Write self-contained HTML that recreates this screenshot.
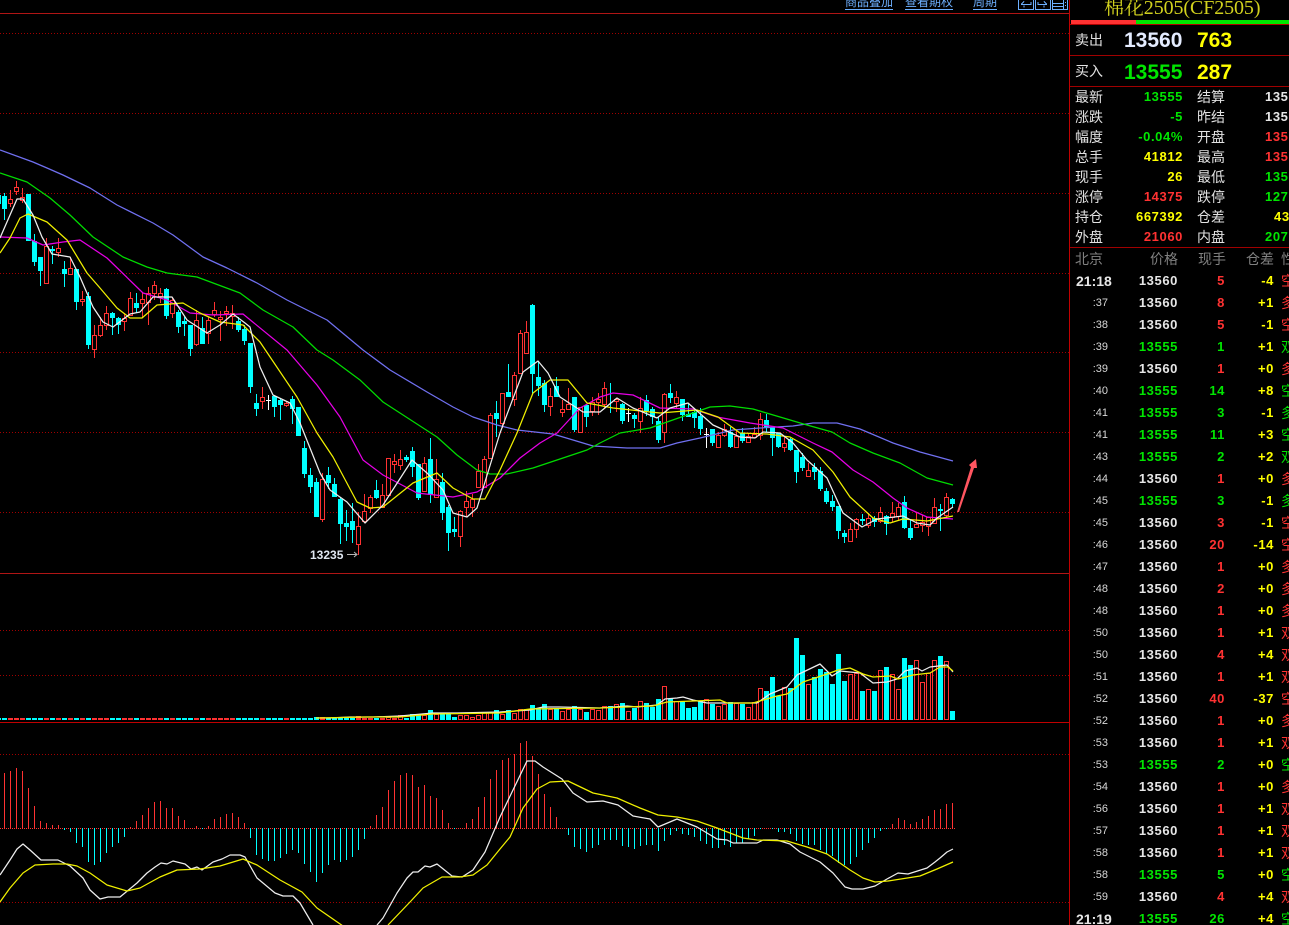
<!DOCTYPE html>
<html><head><meta charset="utf-8"><style>
html,body{margin:0;padding:0;background:#000;width:1289px;height:925px;overflow:hidden}
#c{position:absolute;left:0;top:0}
#p{position:absolute;left:1070px;top:0;width:219px;height:925px;overflow:hidden;font-family:"Liberation Sans","Noto Sans CJK SC",sans-serif;color:#d8d8d8}
#p span{position:absolute;white-space:nowrap}
.l{font-size:14px;line-height:20px;font-family:"Noto Sans CJK SC",sans-serif;color:#e2e2e2;font-weight:400}
.v{font-size:13px;line-height:20px;font-weight:bold;letter-spacing:.6px;text-align:right;right:106px}
.w{font-size:13px;line-height:20px;font-weight:bold;letter-spacing:.6px;left:195px}
.B{font-size:21px;font-weight:bold;line-height:26px}
.R{color:#ff3232}.G{color:#00e600}.Y{color:#ffff00}.W{color:#e6e6e6}
.r{position:absolute;left:0;width:219px;height:22px;line-height:22px}
.r span{line-height:22px}
.t{right:181px;font-size:11px;color:#d8d8d8}
.T{left:6px;font-size:14px;font-weight:bold;color:#e6e6e6}
.q{right:111px;font-size:13px;font-weight:bold;letter-spacing:.6px}
.n{right:64px;font-size:13px;font-weight:bold;letter-spacing:.6px}
.d{right:15px;font-size:13px;font-weight:bold;letter-spacing:.6px;color:#ffff00}
.x{left:211px;font-size:14px;font-family:"Noto Sans CJK SC",sans-serif;font-weight:400}
.h{font-size:14px;line-height:22px;color:#808080;font-family:"Noto Sans CJK SC",sans-serif;font-weight:400}
.ln{position:absolute;top:-4px;font-size:12px;line-height:12px;color:#6eb0ff;font-family:"Noto Sans CJK SC",sans-serif;white-space:nowrap}
</style></head><body>
<svg id="c" width="1289" height="925" viewBox="0 0 1289 925" fill="none">
<g stroke="#a00000" stroke-dasharray="1 2" shape-rendering="crispEdges">
<path d="M0 33.5H1069M0 113.5H1069M0 193.5H1069M0 273.5H1069M0 352.5H1069M0 432.5H1069M0 512.5H1069M0 630.5H1069M0 675.5H1069M0 754.5H1069M0 902.5H1069"/>
</g>
<g stroke="#b01515" shape-rendering="crispEdges">
<path d="M0 13.5H1069M0 573.5H1069"/>
<path stroke="#c00000" d="M0 722.5H1069M1069.5 0V925"/>
</g>
<path stroke="#ff3232" stroke-dasharray="1 1" shape-rendering="crispEdges" d="M0 828.5H955"/>

<g shape-rendering="crispEdges">
<!-- cyan wicks -->
<path stroke="#00ffff" d="M4.5 193V220M34.5 234V266M40.5 257V286M52.5 246V264M64.5 261V287M76.5 269V310M88.5 292V349M112.5 312V335M118.5 317V334M136.5 293V313M166.5 288V319M178.5 310V333M184.5 317V336M190.5 325V356M202.5 317V344M238.5 317V332M244.5 325V345M250.5 343V393M256.5 394V416M274.5 395V417M280.5 398V420M292.5 396V424M304.5 441V478M310.5 468V493M316.5 478V517M328.5 467V489M334.5 478V497M340.5 497V544M346.5 510V541M352.5 503V543M376.5 480V499M406.5 455V462M412.5 447V477M418.5 464V500M430.5 438V503M442.5 473V520M448.5 505V551M454.5 517V537M496.5 401V437M508.5 364V397M532.5 304V395M538.5 361V396M544.5 380V412M556.5 377V397M574.5 397V432M586.5 405V427M610.5 383V413M622.5 403V424M634.5 413V428M646.5 395V416M652.5 407V424M658.5 417V443M670.5 384V403M682.5 399V421M688.5 403V417M694.5 410V428M700.5 408V435M712.5 429V446M730.5 427V448M742.5 428V443M766.5 414V432M772.5 427V456M778.5 433V448M790.5 438V451M796.5 450V483M802.5 453V471M814.5 463V480M820.5 467V491M826.5 488V504M832.5 495V511M838.5 506V539M844.5 530V543M862.5 514V525M874.5 516V527M886.5 515V535M904.5 496V529M910.5 520V540M940.5 504V531M952.5 498V508"/>
<!-- cyan bodies -->
<path stroke="#00ffff" stroke-width="5" d="M-1.5 195V204M4.5 196V209M28.5 194V241M34.5 241V262M40.5 257V271M52.5 249V251M64.5 269V274M76.5 269V302M88.5 296V345M112.5 313V318M118.5 318V325M136.5 303V308M166.5 289V316M178.5 312V327M184.5 321V324M190.5 325V349M202.5 328V344M238.5 321V330M244.5 329V341M250.5 343V387M256.5 403V409M274.5 396V407M280.5 400V405M292.5 399V409M298.5 407V436M304.5 448V474M310.5 475V487M316.5 482V517M328.5 475V483M334.5 484V497M340.5 499V524M346.5 523V527M352.5 521V530M376.5 490V498M406.5 457V460M412.5 451V467M418.5 464V498M430.5 459V495M442.5 482V513M448.5 507V533M454.5 529V532M496.5 413V419M508.5 392V397M532.5 305V374M538.5 377V386M544.5 383V405M556.5 386V397M574.5 397V430M586.5 405V417M622.5 404V421M634.5 415V419M646.5 400V411M652.5 409V417M658.5 421V440M670.5 393V398M682.5 399V415M688.5 414V417M694.5 412V418M700.5 416V429M712.5 429V443M730.5 432V447M742.5 433V441M766.5 420V428M772.5 427V438M778.5 433V447M790.5 439V450M796.5 450V472M802.5 457V468M814.5 467V472M820.5 471V489M826.5 491V502M832.5 501V507M838.5 506V531M844.5 533V537M862.5 519V521M874.5 518V522M886.5 516V524M904.5 502V528M910.5 528V538M940.5 509V511M952.5 499V504"/>
<!-- red wicks -->
<path stroke="#ff3232" d="M10.5 190V207M16.5 181V195M22.5 188V203M46.5 238V283M58.5 238V257M70.5 257V274M82.5 291V306M94.5 325V358M100.5 317V337M106.5 306V330M124.5 313V331M130.5 292V315M142.5 293V317M148.5 287V325M154.5 281V300M160.5 288V303M172.5 297V318M196.5 310V346M208.5 317V344M214.5 302V317M220.5 311V341M226.5 306V326M232.5 305V329M262.5 387V409M286.5 402V407M322.5 473V522M358.5 512V555M364.5 494V522M370.5 495V513M382.5 484V508M388.5 458V496M394.5 454V473M400.5 450V470M424.5 457V492M436.5 459V498M460.5 510V547M466.5 491V517M472.5 494V517M478.5 464V487M484.5 456V487M490.5 413V458M502.5 393V428M514.5 372V406M520.5 330V373M526.5 321V353M550.5 388V416M562.5 400V417M568.5 388V409M580.5 407V432M592.5 397V416M598.5 393V415M604.5 382V408M616.5 398V412M640.5 397V433M664.5 393V443M676.5 391V408M718.5 432V448M724.5 424V437M736.5 431V448M748.5 433V443M754.5 427V437M760.5 413V440M784.5 437V452M808.5 463V476M850.5 523V542M856.5 518V538M868.5 513V528M880.5 507V523M892.5 502V522M898.5 503V521M916.5 512V528M922.5 515V532M928.5 517V536M934.5 498V523M946.5 493V519"/>
<!-- red bodies -->
<path stroke="#ff3232" fill="#000" d="M8.5 199.5h4V203.5h-4zM14.5 187.5h4V191.5h-4zM20.5 197.5h4V200.5h-4zM44.5 246.5h4V283.5h-4zM56.5 248.5h4V252.5h-4zM68.5 268.5h4V274.5h-4zM80.5 299.5h4V301.5h-4zM92.5 335.5h4V349.5h-4zM98.5 325.5h4V335.5h-4zM104.5 313.5h4V325.5h-4zM122.5 318.5h4V321.5h-4zM128.5 298.5h4V315.5h-4zM140.5 299.5h4V303.5h-4zM146.5 293.5h4V302.5h-4zM152.5 285.5h4V293.5h-4zM158.5 293.5h4V296.5h-4zM170.5 300.5h4V313.5h-4zM194.5 320.5h4V344.5h-4zM206.5 320.5h4V333.5h-4zM212.5 310.5h4V314.5h-4zM218.5 317.5h4V319.5h-4zM224.5 311.5h4V313.5h-4zM230.5 313.5h4V316.5h-4zM260.5 397.5h4V401.5h-4zM284.5 403.5h4V405.5h-4zM320.5 479.5h4V519.5h-4zM356.5 526.5h4V544.5h-4zM362.5 511.5h4V521.5h-4zM368.5 497.5h4V508.5h-4zM380.5 495.5h4V507.5h-4zM386.5 458.5h4V495.5h-4zM392.5 461.5h4V464.5h-4zM398.5 459.5h4V465.5h-4zM422.5 463.5h4V491.5h-4zM434.5 479.5h4V497.5h-4zM458.5 511.5h4V536.5h-4zM464.5 501.5h4V507.5h-4zM470.5 499.5h4V507.5h-4zM476.5 471.5h4V487.5h-4zM482.5 459.5h4V487.5h-4zM488.5 415.5h4V458.5h-4zM500.5 393.5h4V423.5h-4zM512.5 375.5h4V399.5h-4zM518.5 333.5h4V373.5h-4zM524.5 332.5h4V353.5h-4zM548.5 396.5h4V406.5h-4zM560.5 409.5h4V412.5h-4zM566.5 404.5h4V409.5h-4zM578.5 407.5h4V432.5h-4zM590.5 402.5h4V411.5h-4zM596.5 399.5h4V402.5h-4zM602.5 388.5h4V404.5h-4zM614.5 399.5h4V401.5h-4zM638.5 408.5h4V421.5h-4zM662.5 394.5h4V432.5h-4zM674.5 397.5h4V403.5h-4zM716.5 435.5h4V447.5h-4zM722.5 429.5h4V435.5h-4zM734.5 436.5h4V447.5h-4zM746.5 436.5h4V442.5h-4zM752.5 434.5h4V437.5h-4zM758.5 419.5h4V435.5h-4zM782.5 443.5h4V447.5h-4zM806.5 470.5h4V476.5h-4zM848.5 529.5h4V541.5h-4zM854.5 519.5h4V529.5h-4zM866.5 518.5h4V525.5h-4zM878.5 512.5h4V521.5h-4zM890.5 513.5h4V517.5h-4zM896.5 507.5h4V516.5h-4zM914.5 524.5h4V527.5h-4zM920.5 522.5h4V525.5h-4zM926.5 517.5h4V526.5h-4zM932.5 507.5h4V523.5h-4zM944.5 497.5h4V515.5h-4z"/>
<!-- white doji -->
<path stroke="#fff" d="M268.5 395V410M266 400.5h5M628.5 408V422M626 413.5h5M706.5 428V448M704 434.5h5"/>

<!-- volume -->
<path stroke="#00ffff" stroke-width="5" d="M-1.5 720v-2M4.5 720v-2M28.5 720v-2M34.5 720v-2M40.5 720v-2M52.5 720v-2M64.5 720v-2M76.5 720v-2M88.5 720v-2M112.5 720v-2M118.5 720v-2M136.5 720v-2M166.5 720v-2M178.5 720v-2M184.5 720v-2M190.5 720v-2M202.5 720v-2M238.5 720v-2M244.5 720v-2M250.5 720v-2M256.5 720v-2M268.5 720v-2M274.5 720v-2M280.5 720v-2M292.5 720v-2M298.5 720v-2M304.5 720v-2M310.5 720v-2M316.5 720v-3M328.5 720v-2M334.5 720v-2M340.5 720v-3M346.5 720v-3M352.5 720v-2M376.5 720v-2M406.5 720v-2M412.5 720v-6M418.5 720v-6M430.5 720v-10M442.5 720v-6M448.5 720v-6M454.5 720v-3M496.5 720v-10M508.5 720v-10M532.5 720v-15M538.5 720v-12M544.5 720v-16M556.5 720v-12M574.5 720v-14M586.5 720v-8M610.5 720v-14M622.5 720v-17M634.5 720v-12M646.5 720v-17M652.5 720v-13M658.5 720v-21M670.5 720v-21M682.5 720v-19M688.5 720v-12M694.5 720v-13M700.5 720v-19M712.5 720v-16M730.5 720v-18M742.5 720v-16M766.5 720v-29M772.5 720v-43M778.5 720v-24M790.5 720v-32M796.5 720v-82M802.5 720v-65M814.5 720v-43M820.5 720v-51M826.5 720v-48M832.5 720v-36M838.5 720v-66M844.5 720v-39M862.5 720v-29M874.5 720v-29M886.5 720v-53M904.5 720v-62M910.5 720v-55M940.5 720v-64M952.5 720v-9"/>
<path stroke="#ff3232" stroke-width="5" d="M10.5 720v-2M16.5 720v-2M22.5 720v-2M46.5 720v-2M58.5 720v-2M70.5 720v-2M82.5 720v-2M94.5 720v-2M100.5 720v-2M106.5 720v-2M124.5 720v-2M130.5 720v-2M142.5 720v-2M148.5 720v-2M154.5 720v-2M160.5 720v-2M172.5 720v-2M196.5 720v-2M208.5 720v-2M214.5 720v-2M220.5 720v-2M226.5 720v-2M232.5 720v-2M262.5 720v-2M286.5 720v-2M322.5 720v-3M358.5 720v-4M364.5 720v-2M370.5 720v-2M382.5 720v-2M394.5 720v-2"/>
<path stroke="#ff3232" d="M386.5 717.5h4V719.5h-4zM398.5 715.5h4V719.5h-4zM422.5 715.5h4V719.5h-4zM434.5 714.5h4V719.5h-4zM458.5 715.5h4V719.5h-4zM464.5 715.5h4V719.5h-4zM470.5 717.5h4V719.5h-4zM476.5 715.5h4V719.5h-4zM482.5 712.5h4V719.5h-4zM488.5 712.5h4V719.5h-4zM500.5 714.5h4V719.5h-4zM512.5 713.5h4V719.5h-4zM518.5 709.5h4V719.5h-4zM524.5 709.5h4V719.5h-4zM548.5 709.5h4V719.5h-4zM560.5 711.5h4V719.5h-4zM566.5 709.5h4V719.5h-4zM578.5 709.5h4V719.5h-4zM590.5 709.5h4V719.5h-4zM596.5 710.5h4V719.5h-4zM602.5 706.5h4V719.5h-4zM614.5 704.5h4V719.5h-4zM626.5 711.5h4V719.5h-4zM638.5 701.5h4V719.5h-4zM662.5 686.5h4V719.5h-4zM674.5 701.5h4V719.5h-4zM704.5 699.5h4V719.5h-4zM716.5 706.5h4V719.5h-4zM722.5 704.5h4V719.5h-4zM734.5 703.5h4V719.5h-4zM746.5 707.5h4V719.5h-4zM752.5 702.5h4V719.5h-4zM758.5 688.5h4V719.5h-4zM782.5 687.5h4V719.5h-4zM806.5 684.5h4V719.5h-4zM848.5 674.5h4V719.5h-4zM854.5 673.5h4V719.5h-4zM866.5 689.5h4V719.5h-4zM878.5 670.5h4V719.5h-4zM890.5 674.5h4V719.5h-4zM896.5 689.5h4V719.5h-4zM914.5 660.5h4V719.5h-4zM920.5 682.5h4V719.5h-4zM926.5 673.5h4V719.5h-4zM932.5 660.5h4V719.5h-4zM944.5 661.5h4V719.5h-4z"/>

<!-- MACD histogram -->
<path stroke="#ff3232" d="M4.5 828v-55M10.5 828v-57M16.5 828v-60M22.5 828v-57M28.5 828v-40M34.5 828v-22M40.5 828v-7M46.5 828v-5M52.5 828v-3M58.5 828v-3M130.5 828v-1M136.5 828v-7M142.5 828v-13M148.5 828v-20M154.5 828v-26M160.5 828v-27M166.5 828v-20M172.5 828v-20M178.5 828v-12M184.5 828v-8M196.5 828v-2M208.5 828v-2M214.5 828v-9M220.5 828v-11M226.5 828v-14M232.5 828v-15M238.5 828v-11M244.5 828v-5M370.5 828v-2M376.5 828v-13M382.5 828v-21M388.5 828v-38M394.5 828v-47M400.5 828v-53M406.5 828v-55M412.5 828v-53M418.5 828v-41M424.5 828v-43M430.5 828v-32M436.5 828v-30M442.5 828v-18M448.5 828v-5M466.5 828v-5M472.5 828v-9M478.5 828v-21M484.5 828v-31M490.5 828v-49M496.5 828v-58M502.5 828v-68M508.5 828v-70M514.5 828v-74M520.5 828v-85M526.5 828v-87M532.5 828v-72M538.5 828v-54M544.5 828v-34M550.5 828v-21M556.5 828v-11M892.5 828v-4M898.5 828v-10M904.5 828v-8M910.5 828v-4M916.5 828v-6M922.5 828v-9M928.5 828v-12M934.5 828v-18M940.5 828v-19M946.5 828v-24M952.5 828v-25"/>
<path stroke="#00ffff" d="M64.5 828v2M70.5 828v4M76.5 828v15M82.5 828v19M88.5 828v34M94.5 828v37M100.5 828v34M106.5 828v25M112.5 828v19M118.5 828v15M124.5 828v9M202.5 828v1M250.5 828v10M256.5 828v27M262.5 828v31M268.5 828v33M274.5 828v33M280.5 828v30M286.5 828v26M292.5 828v22M298.5 828v25M304.5 828v36M310.5 828v44M316.5 828v54M322.5 828v45M328.5 828v37M334.5 828v32M340.5 828v34M346.5 828v32M352.5 828v29M358.5 828v22M364.5 828v11M454.5 828v1M568.5 828v7M574.5 828v19M580.5 828v21M586.5 828v24M592.5 828v20M598.5 828v17M604.5 828v12M610.5 828v12M616.5 828v12M622.5 828v18M628.5 828v19M634.5 828v21M640.5 828v18M646.5 828v17M652.5 828v17M658.5 828v23M664.5 828v13M670.5 828v7M676.5 828v3M682.5 828v6M688.5 828v7M694.5 828v9M700.5 828v13M706.5 828v16M712.5 828v20M718.5 828v20M724.5 828v17M730.5 828v19M736.5 828v15M742.5 828v15M748.5 828v11M754.5 828v8M760.5 828v1M772.5 828v1M778.5 828v4M784.5 828v4M790.5 828v6M796.5 828v13M802.5 828v16M808.5 828v17M814.5 828v17M820.5 828v22M826.5 828v26M832.5 828v28M838.5 828v35M844.5 828v37M850.5 828v36M856.5 828v29M862.5 828v22M868.5 828v15M874.5 828v10M880.5 828v3M886.5 828v1"/>
</g>

<!-- MAs -->
<g stroke-linejoin="round" stroke-width="1.25">
<polyline stroke="#7070f0" points="0,150 33,162 47,168 63,175 90,188 117,205 153,223 173,235 203,257 227,268 257,283 287,300 327,320 363,350 390,370 427,392 453,407 473,417 497,425 517,430 553,434 593,446 627,448 660,448 677,443 700,438 733,430 760,428 793,426 813,423 837,423 860,429 893,443 920,452 953,461"/>
<polyline stroke="#00dc00" points="0,173 27,182 50,198 70,215 93,237 123,257 147,267 167,273 197,277 240,293 263,310 293,327 317,350 333,360 360,380 383,402 437,437 457,455 477,470 490,474 507,474 533,468 563,458 587,450 600,443 620,433 650,428 687,415 710,407 730,406 753,409 780,417 807,425 832,432 850,443 873,453 900,463 927,478 953,485"/>
<polyline stroke="#e600e6" points="0,237 27,238 43,245 63,242 80,240 107,258 143,293 167,300 190,313 213,315 243,314 287,350 317,385 340,417 363,460 383,475 417,493 453,497 477,492 500,478 520,458 540,443 557,433 580,408 600,397 613,393 633,395 660,408 693,409 717,417 750,423 783,428 797,435 813,443 832,452 853,470 873,482 893,498 907,508 927,517 953,519"/>
<polyline stroke="#f0f000" points="0,253 10,238 20,218 28,214 47,222 67,240 87,273 100,288 117,308 130,318 142,318 157,305 183,303 200,313 220,322 243,325 260,342 297,397 317,433 333,457 357,502 370,508 383,507 413,483 437,473 453,488 473,499 485,499 500,470 517,433 533,393 550,380 568,380 587,403 613,408 660,413 697,410 718,417 740,433 767,434 790,437 813,450 833,472 850,497 873,518 890,523 903,519 927,521 953,516"/>
<polyline stroke="#eeeeee" points="0,238 17,199 23,199 33,215 42,237 52,254 70,257 80,277 93,307 103,322 113,327 130,314 140,312 153,297 172,297 187,320 207,333 220,325 233,314 245,323 250,327 260,367 273,395 290,403 300,423 320,473 330,490 347,502 365,523 383,505 412,460 427,473 443,490 453,513 467,517 477,508 500,433 523,372 538,361 548,373 560,397 583,412 600,412 617,398 633,408 657,418 670,408 688,403 713,425 740,437 755,438 763,432 780,433 793,443 807,460 827,478 843,513 862,527 877,519 903,516 917,523 930,525 937,518 953,507"/>
<!-- volume MAs -->
<polyline stroke="#eeeeee" points="316,718 330,718 350,717 373,717 400,716 433,713 457,713 500,712 530,710 543,707 560,707 600,708 627,706 637,707 657,705 665,699 677,698 683,697 693,700 707,703 757,703 770,694 787,687 797,675 820,664 832,676 840,671 860,673 873,683 887,682 897,679 905,671 917,668 922,671 930,667 947,665 953,672"/>
<polyline stroke="#f0f000" points="316,718 367,717 400,717 433,714 500,713 530,709 600,708 653,706 667,702 720,700 727,703 753,703 777,696 787,694 803,682 830,673 838,670 850,668 863,674 873,677 890,676 898,679 913,675 930,673 940,667 948,667 953,671"/>
<!-- MACD lines -->
<polyline stroke="#eeeeee" points="0,875 10,860 17,849 23,844 30,850 41,860 58,860 70,866 83,878 90,890 100,899 108,897 120,897 137,883 147,873 155,867 161,863 167,864 173,861 185,864 191,869 197,867 202,870 213,862 222,859 230,855 240,855 245,857 257,878 275,893 283,896 293,896 300,903 313,925"/>
<polyline stroke="#eeeeee" points="377,925 383,918 397,893 407,878 413,872 418,872 425,866 430,867 437,864 452,876 462,877 473,870 485,852 500,817 513,790 527,761 535,761 543,767 562,779 573,793 587,802 603,801 618,805 633,816 650,819 658,827 677,819 697,827 717,839 727,840 733,843 757,843 763,840 777,840 790,844 800,852 820,862 833,873 845,887 852,889 863,889 875,886 887,879 898,873 908,874 927,868 935,862 940,858 947,852 953,849"/>
<polyline stroke="#f0f000" points="0,902 10,888 23,873 35,865 53,864 67,864 77,866 90,873 107,885 127,891 140,888 160,877 177,870 200,869 220,866 243,859 257,865 280,880 302,892 317,908 343,926"/>
<polyline stroke="#f0f000" points="388,925 410,902 423,888 442,877 460,877 473,875 487,865 500,849 510,837 523,808 537,789 550,782 568,781 593,793 617,798 640,808 658,815 677,817 697,821 717,828 743,838 757,840 787,841 807,847 827,854 850,870 863,878 875,882 888,881 920,876 937,869 953,862"/>
</g>

<!-- low marker -->
<text x="310" y="559" font-family="Liberation Sans" font-size="12" font-weight="bold" fill="#dfe6f0">13235</text>
<path stroke="#b4b4b4" d="M347 554.5H357M354 552L357 554.5L354 557"/>
<!-- red arrow -->
<polygon fill="#ff5560" points="957,512 971,467 969,465 976,459 977,468 974,468 959,512"/>

<!-- top links and tool buttons -->
<g stroke="#6eb0ff" shape-rendering="crispEdges">
<path d="M845 9.5H893M905 9.5H953M973 9.5H997"/>
<path d="M1018.5 0V9.5H1033.5V0M1035.5 0V9.5H1050.5V0M1052.5 0V9.5H1067.5V0M1021 4.5L1024 1.5M1021 4.5H1031V2M1024 5.5V7.5M1047 4.5L1044 1.5M1047 4.5H1038V2M1044 5.5V7.5M1053 3.5H1063M1053 6.5H1063M1063.5 0V9M1065.5 2V3M1065.5 5V6"/>
</g>
</svg>
<div class="ln" style="left:845px">商品叠加</div>
<div class="ln" style="left:905px">查看期权</div>
<div class="ln" style="left:973px">周期</div>

<div id="p">
<span style="left:34px;top:-3px;font-size:20px;line-height:22px;letter-spacing:-.1px;color:#d2d21e;font-family:'Liberation Serif','Noto Serif CJK SC',serif">棉花2505(CF2505)</span>
<div style="position:absolute;left:1px;top:20px;width:65px;height:4px;background:#ff3232"></div>
<div style="position:absolute;left:66px;top:20px;width:153px;height:4px;background:#00e600"></div>
<div style="position:absolute;left:0;top:24px;width:219px;height:1px;background:#b00000"></div>
<div style="position:absolute;left:0;top:55px;width:219px;height:1px;background:#a00000"></div>
<div style="position:absolute;left:0;top:86px;width:219px;height:1px;background:#a00000"></div>
<div style="position:absolute;left:0;top:247px;width:219px;height:1px;background:#a00000"></div>

<span class="l" style="left:5px;top:30px">卖出</span><span class="B" style="left:54px;top:28px;color:#e4ecff">13560</span><span class="B Y" style="left:127px;top:28px">763</span>
<span class="l" style="left:5px;top:61px">买入</span><span class="B G" style="left:54px;top:60px">13555</span><span class="B Y" style="left:127px;top:60px">287</span>

<span class="l" style="left:5px;top:87px">最新</span><span class="v G" style="top:87px">13555</span><span class="l" style="left:127px;top:87px">结算</span><span class="w W" style="top:87px">135</span>
<span class="l" style="left:5px;top:107px">涨跌</span><span class="v G" style="top:107px">-5</span><span class="l" style="left:127px;top:107px">昨结</span><span class="w W" style="top:107px">135</span>
<span class="l" style="left:5px;top:127px">幅度</span><span class="v G" style="top:127px">-0.04%</span><span class="l" style="left:127px;top:127px">开盘</span><span class="w R" style="top:127px">135</span>
<span class="l" style="left:5px;top:147px">总手</span><span class="v Y" style="top:147px">41812</span><span class="l" style="left:127px;top:147px">最高</span><span class="w R" style="top:147px">135</span>
<span class="l" style="left:5px;top:167px">现手</span><span class="v Y" style="top:167px">26</span><span class="l" style="left:127px;top:167px">最低</span><span class="w G" style="top:167px">135</span>
<span class="l" style="left:5px;top:187px">涨停</span><span class="v R" style="top:187px">14375</span><span class="l" style="left:127px;top:187px">跌停</span><span class="w G" style="top:187px">127</span>
<span class="l" style="left:5px;top:207px">持仓</span><span class="v Y" style="top:207px">667392</span><span class="l" style="left:127px;top:207px">仓差</span><span class="w Y" style="top:207px;left:204px">43</span>
<span class="l" style="left:5px;top:227px">外盘</span><span class="v R" style="top:227px">21060</span><span class="l" style="left:127px;top:227px">内盘</span><span class="w G" style="top:227px">207</span>

<span class="h" style="left:5px;top:248px">北京</span><span class="h" style="left:80px;top:248px">价格</span><span class="h" style="left:128px;top:248px">现手</span><span class="h" style="left:176px;top:248px">仓差</span><span class="h" style="left:211px;top:248px">性</span>

<div class="r" style="top:270px"><span class="T">21:18</span><span class="q W">13560</span><span class="n R">5</span><span class="d">-4</span><span class="x R">空</span></div>
<div class="r" style="top:292px"><span class="t">:37</span><span class="q W">13560</span><span class="n R">8</span><span class="d">+1</span><span class="x R">多</span></div>
<div class="r" style="top:314px"><span class="t">:38</span><span class="q W">13560</span><span class="n R">5</span><span class="d">-1</span><span class="x R">空</span></div>
<div class="r" style="top:336px"><span class="t">:39</span><span class="q G">13555</span><span class="n G">1</span><span class="d">+1</span><span class="x G">双</span></div>
<div class="r" style="top:358px"><span class="t">:39</span><span class="q W">13560</span><span class="n R">1</span><span class="d">+0</span><span class="x R">多</span></div>
<div class="r" style="top:380px"><span class="t">:40</span><span class="q G">13555</span><span class="n G">14</span><span class="d">+8</span><span class="x G">空</span></div>
<div class="r" style="top:402px"><span class="t">:41</span><span class="q G">13555</span><span class="n G">3</span><span class="d">-1</span><span class="x G">多</span></div>
<div class="r" style="top:424px"><span class="t">:41</span><span class="q G">13555</span><span class="n G">11</span><span class="d">+3</span><span class="x G">空</span></div>
<div class="r" style="top:446px"><span class="t">:43</span><span class="q G">13555</span><span class="n G">2</span><span class="d">+2</span><span class="x G">双</span></div>
<div class="r" style="top:468px"><span class="t">:44</span><span class="q W">13560</span><span class="n R">1</span><span class="d">+0</span><span class="x R">多</span></div>
<div class="r" style="top:490px"><span class="t">:45</span><span class="q G">13555</span><span class="n G">3</span><span class="d">-1</span><span class="x G">多</span></div>
<div class="r" style="top:512px"><span class="t">:45</span><span class="q W">13560</span><span class="n R">3</span><span class="d">-1</span><span class="x R">空</span></div>
<div class="r" style="top:534px"><span class="t">:46</span><span class="q W">13560</span><span class="n R">20</span><span class="d">-14</span><span class="x R">空</span></div>
<div class="r" style="top:556px"><span class="t">:47</span><span class="q W">13560</span><span class="n R">1</span><span class="d">+0</span><span class="x R">多</span></div>
<div class="r" style="top:578px"><span class="t">:48</span><span class="q W">13560</span><span class="n R">2</span><span class="d">+0</span><span class="x R">多</span></div>
<div class="r" style="top:600px"><span class="t">:48</span><span class="q W">13560</span><span class="n R">1</span><span class="d">+0</span><span class="x R">多</span></div>
<div class="r" style="top:622px"><span class="t">:50</span><span class="q W">13560</span><span class="n R">1</span><span class="d">+1</span><span class="x R">双</span></div>
<div class="r" style="top:644px"><span class="t">:50</span><span class="q W">13560</span><span class="n R">4</span><span class="d">+4</span><span class="x R">双</span></div>
<div class="r" style="top:666px"><span class="t">:51</span><span class="q W">13560</span><span class="n R">1</span><span class="d">+1</span><span class="x R">双</span></div>
<div class="r" style="top:688px"><span class="t">:52</span><span class="q W">13560</span><span class="n R">40</span><span class="d">-37</span><span class="x R">空</span></div>
<div class="r" style="top:710px"><span class="t">:52</span><span class="q W">13560</span><span class="n R">1</span><span class="d">+0</span><span class="x R">多</span></div>
<div class="r" style="top:732px"><span class="t">:53</span><span class="q W">13560</span><span class="n R">1</span><span class="d">+1</span><span class="x R">双</span></div>
<div class="r" style="top:754px"><span class="t">:53</span><span class="q G">13555</span><span class="n G">2</span><span class="d">+0</span><span class="x G">空</span></div>
<div class="r" style="top:776px"><span class="t">:54</span><span class="q W">13560</span><span class="n R">1</span><span class="d">+0</span><span class="x R">多</span></div>
<div class="r" style="top:798px"><span class="t">:56</span><span class="q W">13560</span><span class="n R">1</span><span class="d">+1</span><span class="x R">双</span></div>
<div class="r" style="top:820px"><span class="t">:57</span><span class="q W">13560</span><span class="n R">1</span><span class="d">+1</span><span class="x R">双</span></div>
<div class="r" style="top:842px"><span class="t">:58</span><span class="q W">13560</span><span class="n R">1</span><span class="d">+1</span><span class="x R">双</span></div>
<div class="r" style="top:864px"><span class="t">:58</span><span class="q G">13555</span><span class="n G">5</span><span class="d">+0</span><span class="x G">空</span></div>
<div class="r" style="top:886px"><span class="t">:59</span><span class="q W">13560</span><span class="n R">4</span><span class="d">+4</span><span class="x R">双</span></div>
<div class="r" style="top:908px"><span class="T">21:19</span><span class="q G">13555</span><span class="n G">26</span><span class="d">+4</span><span class="x G">空</span></div>
</div>
</body></html>
